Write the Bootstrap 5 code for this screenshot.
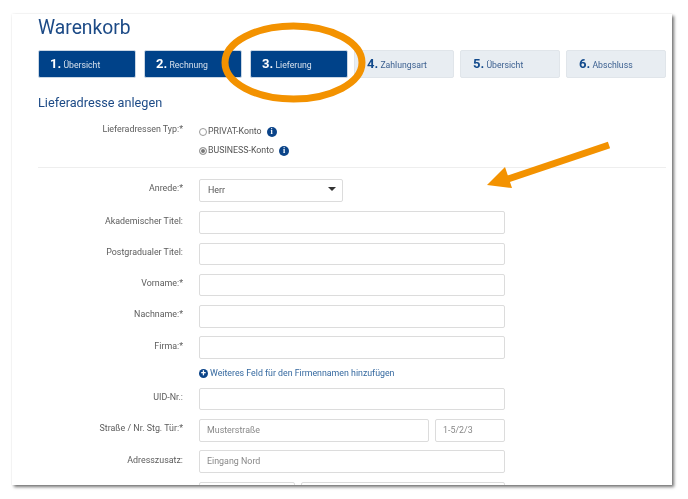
<!DOCTYPE html>
<html lang="de"><head><meta charset="utf-8"><title>Warenkorb</title>
<link href="https://cdn.jsdelivr.net/npm/bootstrap@5.3.0/dist/css/bootstrap.min.css" rel="stylesheet">
<style>
html,body{height:499px;overflow:hidden;background:#fff}
body{font-family:Roboto,"Liberation Sans",sans-serif;font-size:8.9px;color:#555;position:relative}
.sheet{margin:14px 0 0 12px;width:660px;height:471px;overflow:hidden;background:#fff;padding:0 6px 0 26px;box-shadow:2px 2px 3px rgba(0,0,0,.55),0 0 2px rgba(0,0,0,.08);filter:blur(.3px)}
.ttl{font-size:19.3px;line-height:24px;color:#1c4a86;font-weight:400;margin:2px 0 0}
.stepper{gap:8px;margin-top:10px}
.stp{width:98px;height:28px;border-radius:2px;background:#004289;color:#d5e0ec;border:1px solid #c9d6e4;padding-left:11px;font-size:8.7px;line-height:26px;white-space:nowrap;flex:none}
.stp b{font-size:13px;color:#fff;font-weight:700}
.stp.off{width:100px;background:#e8edf2;border-color:#e0e5ea;color:#3d6191;padding-left:12px;margin-left:-2px}
.stp.off b{color:#124a8c}
.sub{font-size:12.7px;line-height:16px;color:#1c4a86;margin:17px 0 0;font-weight:400}
.lbl{width:145px;text-align:right;flex:none;color:#5c5c5c;margin-right:16px;line-height:12px}
.rw>.lbl{margin-top:-4px}
.radios{margin-top:11px;height:37px}
.radios .lbl{padding-top:1px}
.rdo{height:19px;line-height:13px;color:#555;font-size:8.8px}
.dot{width:8px;height:8px;border-radius:50%;border:1px solid #9a9a9a;background:#fff;flex:none;margin-right:1px}
.dot.on{background:#777;box-shadow:inset 0 0 0 1px #fff}
.inf{width:10px;height:10px;border-radius:50%;background:#0b4489;color:#fff;font-size:8px;line-height:10px;text-align:center;font-weight:700;font-family:"Liberation Serif",serif;flex:none;margin-left:5px}
.rule{border-top:1px solid #eee;margin:8px 0 11px;width:628px}
.rw{height:22.5px;margin-bottom:8.8px}
.rw-first{margin-bottom:9.8px}
.fld{display:block;height:100%;border:1px solid #dcdcdc;border-radius:2px;background:#fff;padding:0 7px;color:#888;font-size:8.9px;line-height:21px;width:306px;flex:none}
.pick{width:144px;color:#555;padding:0 6px 0 8px}
.fld-street{width:230px;margin-right:6px}.fld-no{width:70px}.fld-zip{width:96px;margin-right:6px}.fld-city{width:204px}
.tri{width:0;height:0;border:4.500px solid transparent;border-top:4.500px solid #333;border-bottom:0;margin-top:-3px}
.ln{height:13px;margin:-1px 0 8px 161px;color:#34689f;line-height:13px;gap:2px;font-size:8.8px}
.pl{width:9px;height:9px;border-radius:50%;background:#0b4489;color:#fff;font-size:9px;line-height:8.5px;text-align:center;font-weight:700;flex:none}
.overlay{position:absolute;left:0;top:0;pointer-events:none;filter:blur(.3px)}
</style></head>
<body>
<main class="sheet">
<h1 class="ttl">Warenkorb</h1>
<div class="d-flex stepper">
<div class="stp"><b>1.</b> Übersicht</div>
<div class="stp"><b>2.</b> Rechnung</div>
<div class="stp"><b>3.</b> Lieferung</div>
<div class="stp off"><b>4.</b> Zahlungsart</div>
<div class="stp off"><b>5.</b> Übersicht</div>
<div class="stp off"><b>6.</b> Abschluss</div>
</div>
<h2 class="sub">Lieferadresse anlegen</h2>
<div class="d-flex radios">
<div class="lbl">Lieferadressen Typ:*</div>
<div>
<div class="d-flex align-items-center rdo"><span class="dot"></span>PRIVAT-Konto<span class="inf">i</span></div>
<div class="d-flex align-items-center rdo"><span class="dot on"></span>BUSINESS-Konto<span class="inf">i</span></div>
</div></div>
<div class="rule"></div>
<div class="d-flex align-items-center rw rw-first"><div class="lbl">Anrede:*</div><div class="fld pick d-flex align-items-center justify-content-between"><span>Herr</span><span class="tri"></span></div></div>
<div class="d-flex align-items-center rw"><div class="lbl">Akademischer Titel:</div><div class="fld"></div></div>
<div class="d-flex align-items-center rw"><div class="lbl">Postgradualer Titel:</div><div class="fld"></div></div>
<div class="d-flex align-items-center rw"><div class="lbl">Vorname:*</div><div class="fld"></div></div>
<div class="d-flex align-items-center rw"><div class="lbl">Nachname:*</div><div class="fld"></div></div>
<div class="d-flex align-items-center rw"><div class="lbl">Firma:*</div><div class="fld"></div></div>
<div class="d-flex align-items-center ln"><span class="pl">+</span>Weiteres Feld für den Firmennamen hinzufügen</div>
<div class="d-flex align-items-center rw"><div class="lbl">UID-Nr.:</div><div class="fld"></div></div>
<div class="d-flex align-items-center rw"><div class="lbl">Straße / Nr. Stg. Tür:*</div><div class="fld fld-street">Musterstraße</div><div class="fld fld-no">1-5/2/3</div></div>
<div class="d-flex align-items-center rw"><div class="lbl">Adresszusatz:</div><div class="fld">Eingang Nord</div></div>
<div class="d-flex rw"><div class="lbl"></div><div class="fld fld-zip"></div><div class="fld fld-city"></div></div>
</main>
<svg class="overlay" width="688" height="499" viewBox="0 0 688 499" aria-hidden="true">
<ellipse cx="293.500" cy="62.500" ry="36.500" rx="68.500" fill="none" stroke="#f39200" stroke-width="7"/>
<path d="M609 145 L508 179" stroke="#f39200" stroke-width="7" fill="none"/>
<path d="M487 185 L505 167 L512 188 Z" fill="#f39200"/>
</svg>
<script src="https://cdn.jsdelivr.net/npm/bootstrap@5.3.0/dist/js/bootstrap.bundle.min.js"></script>
</body></html>
